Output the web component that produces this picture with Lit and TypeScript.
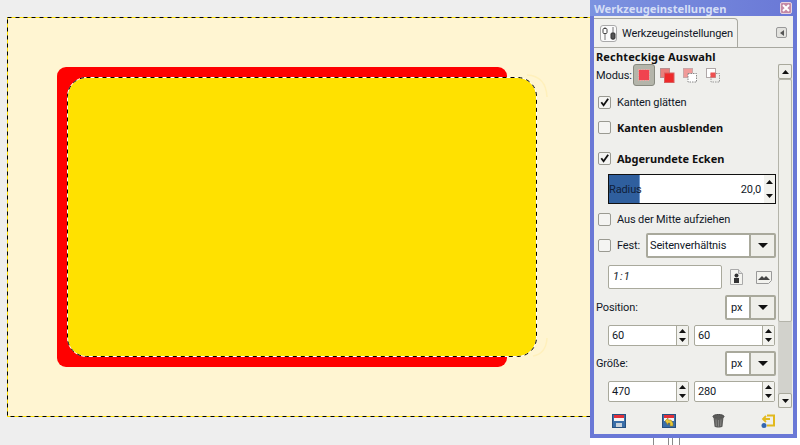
import { LitElement, css, html, svg } from "lit";
import { customElement } from "lit/decorators.js";

const arrowUp = svg`<svg width="7" height="4" viewBox="0 0 7 4"><path d="M3.5 0L7 4H0z" fill="#111"/></svg>`;
const arrowDown = svg`<svg width="7" height="4" viewBox="0 0 7 4"><path d="M0 0h7L3.5 4z" fill="#111"/></svg>`;
const comboArrow = svg`<svg width="10" height="5" viewBox="0 0 10 5"><path d="M0 0h10L5 5z" fill="#111"/></svg>`;
const check = svg`<svg width="12" height="12" viewBox="0 0 12 12"><path d="M2.500 6.200L5 9.500 10 2.500" fill="none" stroke="#111" stroke-width="2"/></svg>`;

const modeIcon = (i: number) => {
  if (i === 0)
    return svg`<svg width="14" height="14" viewBox="0 0 14 14"><rect x="2" y="2" width="10" height="10" fill="#f0434f"/><rect x="1.500" y="1.500" width="11" height="11" fill="none" stroke="#f7a0a0" stroke-dasharray="1.500 1"/></svg>`;
  if (i === 1)
    return svg`<svg width="15" height="15" viewBox="0 0 15 15"><rect x=".5" y=".5" width="9" height="9" fill="#e8807c" stroke="#b89090"/><rect x="4.500" y="5" width="9.500" height="9.500" fill="#ee2a2a" stroke="#d86060"/></svg>`;
  if (i === 2)
    return svg`<svg width="15" height="15" viewBox="0 0 15 15"><rect x=".5" y=".5" width="9" height="9" fill="#f09a98" stroke="#c8a8a8"/><rect x="5" y="5.500" width="8.500" height="8.500" fill="#fff" stroke="#888" stroke-dasharray="1.500 1"/></svg>`;
  return svg`<svg width="15" height="15" viewBox="0 0 15 15"><rect x=".5" y=".5" width="9" height="9" fill="#fff" stroke="#b0a8a8"/><rect x="5" y="5.500" width="8.500" height="8.500" fill="none" stroke="#999" stroke-dasharray="1.500 1"/><rect x="4.500" y="4.500" width="5" height="5" fill="#ee5050"/></svg>`;
};

const toolIcon = svg`<svg width="14" height="15" viewBox="0 0 14 15">
  <path d="M3 1v13M11 1v13" stroke="#777" stroke-width="1"/>
  <rect x="1" y="2.500" width="4" height="5" rx="1" fill="#fff" stroke="#444"/>
  <rect x="9" y="7" width="4" height="6" rx="1" fill="#555" stroke="#333"/>
</svg>`;

const docIcon = svg`<svg width="13" height="16" viewBox="0 0 13 16"><path d="M.5.5h8l4 4v11H.5z" fill="#f4f4f0" stroke="#aaa"/><path d="M8.500.5v4h4" fill="#ddd" stroke="#aaa"/><circle cx="6.500" cy="6.500" r="2" fill="#333"/><rect x="4" y="9" width="5" height="5" fill="#333"/></svg>`;
const landscapeIcon = svg`<svg width="16" height="13" viewBox="0 0 16 13"><path d="M.5.5h15v9l-3 3H.5z" fill="#f2f2ee" stroke="#999"/><path d="M2 9l4-4 2 2 2-2 4 4z" fill="#444"/></svg>`;

const saveIcon = svg`<svg width="14" height="14" viewBox="0 0 14 14"><rect x=".5" y=".5" width="13" height="13" fill="#3a6ea8" stroke="#27507f"/><rect x="2" y="1" width="10" height="3" fill="#e0303a"/><rect x="2" y="4" width="10" height="3" fill="#f4f4f4"/><rect x="4" y="9" width="6" height="4" fill="#c8d2dc"/></svg>`;
const restoreIcon = svg`<svg width="14" height="14" viewBox="0 0 14 14"><rect x=".5" y=".5" width="13" height="13" fill="#3a6ea8" stroke="#27507f"/><rect x="2" y="1" width="10" height="3" fill="#e0303a"/><rect x="2" y="4" width="10" height="3" fill="#f4f4f4"/><path d="M3 7l3-3v2h3l2 3v3H8V9H6v2z" fill="#e8c83a" stroke="#8a7420" stroke-width=".5"/></svg>`;
const trashIcon = svg`<svg width="13" height="14" viewBox="0 0 13 14"><ellipse cx="6.500" cy="2.500" rx="5.500" ry="2" fill="#5c5c5a" stroke="#444"/><path d="M1.500 3l1 9.500c1 1.300 7 1.300 8 0l1-9.500c-2 1.500-8 1.500-10 0z" fill="#5e5e5c"/><path d="M4 5.500l.4 6.500M6.500 6v6.500M9 5.500l-.4 6.500" stroke="#858583"/></svg>`;
const resetIcon = svg`<svg width="14" height="14" viewBox="0 0 14 14"><path d="M6 1.500h7v10H6" fill="none" stroke="#e2b91e" stroke-width="2"/><path d="M2 5h7M5 2L2 5l3 3" fill="none" stroke="#e2b91e" stroke-width="1.800"/><circle cx="3" cy="11.500" r="2.500" fill="#3566b0"/></svg>`;

@customElement("app-root")
export class AppRoot extends LitElement {
  static styles = css`
    :host {
      display: flex;
      width: 800px;
      height: 445px;
      overflow: hidden;
      background: #eeeeee;
      font-family: Roboto, "Noto Sans", sans-serif;
      font-size: 11px;
      letter-spacing: -0.12px;
      color: #111827;
    }
    .canvas {
      display: block;
      width: 590px;
      height: 445px;
      flex: none;
    }
    .side {
      width: 210px;
      height: 445px;
      flex: none;
      background: #fff;
      display: flex;
      flex-direction: column;
    }
    .window {
      width: 207px;
      height: 438px;
      flex: none;
      box-sizing: border-box;
      border: 4px solid #6a78d6;
      border-top: none;
      background: #efefec;
      display: flex;
      flex-direction: column;
    }
    .leftover {
      flex: 1;
      display: flex;
      padding-left: 63px;
    }
    .leftover i {
      width: 1px;
      background: #8a8a8a;
    }
    .leftover i:nth-child(1) {
      margin-right: 14px;
    }
    .leftover i:nth-child(2) {
      margin-right: 3px;
    }
    .leftover i:nth-child(3) {
      margin-right: 6px;
    }
    .titlebar {
      height: 16px;
      margin: 0 -4px;
      padding: 0 5px 0 4px;
      flex: none;
      display: flex;
      align-items: center;
      justify-content: space-between;
      background: linear-gradient(90deg, #7c93e0, #6a78d6);
      color: #d5def6;
      font-family: "Noto Sans", sans-serif;
      font-weight: 700;
      font-size: 11.2px;
      letter-spacing: 0;
    }
    .close {
      width: 12px;
      height: 12px;
      box-sizing: border-box;
      background: #c48aa6;
      border: 1px solid #e6d4e0;
      border-radius: 2px;
      display: flex;
      align-items: center;
      justify-content: center;
    }
    .tabs {
      height: 31px;
      flex: none;
      display: flex;
      align-items: flex-end;
      justify-content: space-between;
      padding-right: 6px;
    }
    .tab {
      width: 144px;
      height: 30px;
      flex: none;
      box-sizing: border-box;
      border: 1px solid #a8a8a0;
      border-width: 1px 1px 0 0;
      border-top-right-radius: 4px;
      display: flex;
      align-items: center;
      gap: 5px;
      padding-left: 6px;
      background: #f1f1ee;
      margin-bottom: -1px;
      white-space: nowrap;
    }
    .tab-icon {
      width: 17px;
      height: 17px;
      flex: none;
      box-sizing: border-box;
      border: 1px solid #aaa;
      border-radius: 3px;
      background: #fbfbfb;
      display: flex;
      align-items: center;
      justify-content: center;
    }
    .pane-menu {
      width: 11px;
      height: 11px;
      box-sizing: border-box;
      border: 1px solid #999;
      border-radius: 2px;
      margin-bottom: 9px;
      display: flex;
      align-items: center;
      justify-content: center;
      background: #e2e2de;
    }
    .pane-menu b {
      border: 3px solid transparent;
      border-right: 4px solid #555;
      border-left: none;
    }
    .pane {
      flex: 1;
      min-height: 0;
      border-top: 1px solid #a8a8a0;
      display: flex;
      flex-direction: column;
    }
    .heading {
      height: 15px;
      margin: 1px 0 0 2px;
      line-height: 15px;
      font-family: "Noto Sans", sans-serif;
      font-weight: 700;
      font-size: 11px;
      letter-spacing: 0.15px;
      color: #111;
    }
    .main {
      display: flex;
      flex: none;
      height: 344px;
    }
    .opts {
      width: 184px;
      flex: none;
      display: flex;
      flex-direction: column;
      padding-left: 2px;
      box-sizing: border-box;
    }
    .row {
      display: flex;
      align-items: center;
      flex: none;
    }
    .modus {
      height: 22px;
      margin-bottom: 4px;
    }
    .modus span {
      width: 37px;
    }
    .mode {
      width: 22px;
      height: 22px;
      margin-right: 1px;
      display: flex;
      align-items: center;
      justify-content: center;
      box-sizing: border-box;
    }
    .mode.on {
      background: #b4b5aa;
      border: 1px solid #888a80;
      border-radius: 3px;
    }
    .check {
      height: 24px;
      gap: 6px;
      padding-left: 2px;
    }
    .check.bold {
      font-family: "Noto Sans", sans-serif;
      font-weight: 700;
      letter-spacing: 0;
      color: #111;
    }
    .gap1 {
      margin-top: 1px;
    }
    .gap7 {
      margin-top: 7px;
    }
    .box {
      width: 13px;
      height: 13px;
      flex: none;
      box-sizing: border-box;
      border: 1px solid #9a9a92;
      border-radius: 2px;
      background: #f4f4f2;
      display: flex;
      align-items: center;
      justify-content: center;
    }
    .scale {
      height: 30px;
      width: 168px;
      flex: none;
      margin: 4px 0 3px 12px;
      box-sizing: border-box;
      border: 1px solid #111;
      background: #fff;
      display: flex;
      align-items: center;
      justify-content: space-between;
    }
    .scale-fill {
      width: 30px;
      height: 28px;
      background: #2f5f9e;
      border-right: 1px solid #6f9ad0;
      display: flex;
      align-items: center;
      white-space: nowrap;
      color: #10203a;
    }
    .scale-end {
      display: flex;
      align-items: center;
      gap: 3px;
      height: 100%;
    }
    .stepper {
      width: 11px;
      height: 100%;
      display: flex;
      flex-direction: column;
      align-items: center;
      justify-content: space-around;
      background: #f2f2ee;
    }
    .fest {
      height: 25px;
      margin-top: 2px;
      padding-left: 2px;
    }
    .fest .lab {
      width: 29px;
      margin-left: 6px;
      flex: none;
    }
    .combo {
      height: 25px;
      flex: none;
      box-sizing: border-box;
      border: 2px solid #a9a99c;
      border-radius: 2px;
      display: flex;
      background: #fff;
    }
    .combo span {
      flex: 1;
      line-height: 21px;
      padding-left: 2px;
    }
    .combo b {
      width: 23px;
      background: #efefea;
      border-left: 2px solid #a9a99c;
      display: flex;
      align-items: center;
      justify-content: center;
    }
    .combo-wide {
      width: 130px;
    }
    .combo-unit {
      width: 51px;
      margin-left: auto;
      margin-right: 2px;
    }
    .combo-unit span {
      padding-left: 4px;
    }
    .ratio {
      height: 24px;
      margin: 7px 0 6px 12px;
    }
    .ratio-entry {
      width: 114px;
      height: 24px;
      flex: none;
      box-sizing: border-box;
      border: 1px solid #a9a99c;
      border-radius: 2px;
      background: #fff;
      line-height: 22px;
      padding-left: 4px;
      font-style: italic;
      letter-spacing: 1px;
    }
    .ratio .doc {
      margin-left: 8px;
      width: 13px;
      display: flex;
    }
    .ratio .land {
      margin-left: 13px;
      width: 16px;
      display: flex;
    }
    .unit-row {
      height: 24px;
    }
    .unit-row.next {
      margin-top: 5px;
    }
    .spins {
      height: 21px;
      margin: 6px 0 0 12px;
      gap: 5px;
    }
    .spin {
      width: 81px;
      height: 21px;
      box-sizing: border-box;
      border: 1px solid #a9a99c;
      border-radius: 2px;
      background: #fff;
      display: flex;
      justify-content: space-between;
    }
    .spin span {
      line-height: 19px;
      padding-left: 3px;
    }
    .spin .stepper {
      border-left: 1px solid #a9a99c;
    }
    .scrollbar {
      width: 14px;
      height: 344px;
      flex: none;
      display: flex;
      flex-direction: column;
      background: #d2d2cc;
    }
    .sb-btn {
      height: 15px;
      flex: none;
      box-sizing: border-box;
      border: 1px solid #a9a99c;
      border-radius: 2px;
      background: #efefea;
      display: flex;
      align-items: center;
      justify-content: center;
    }
    .sb-thumb {
      height: 243px;
      flex: none;
      box-sizing: border-box;
      border: 1px solid #b4b4aa;
      border-radius: 2px;
      background: #efefea;
    }
    .sb-track {
      flex: 1;
    }
    .footer {
      flex: 1;
      display: flex;
      align-items: center;
      padding: 0 18px;
      justify-content: space-between;
      box-sizing: border-box;
    }
    .footer span {
      display: flex;
    }
  `;

  private unitCombo() {
    return html`<div class="combo combo-unit"><span>px</span><b>${comboArrow}</b></div>`;
  }

  private spin(value: string) {
    return html`<div class="spin">
      <span>${value}</span>
      <div class="stepper">${arrowUp}${arrowDown}</div>
    </div>`;
  }

  private renderCanvas() {
    return svg`<svg class="canvas" viewBox="0 0 590 445" xmlns="http://www.w3.org/2000/svg">
      <rect width="590" height="445" fill="#eeeeee"/>
      <rect x="7.500" y="17.500" width="600" height="399" fill="#fff5d2"/>
      <path d="M527 75Q546 76 547 97M547 338Q546 354 533 356" fill="none" stroke="#fff0bc" stroke-width="1.500"/>
      <rect x="57" y="67" width="450" height="300" rx="9" fill="#ff0000"/>
      <rect x="67.500" y="77.500" width="469" height="279" rx="19" fill="#ffe100"/>
      <rect x="67.500" y="77.500" width="469" height="279" rx="19" fill="none" stroke="#fff"/>
      <rect x="67.500" y="77.500" width="469" height="279" rx="19" fill="none" stroke="#000" stroke-dasharray="4 4"/>
      <rect x="7.500" y="17.500" width="600" height="399" fill="none" stroke="#ffe100"/>
      <rect x="7.500" y="17.500" width="600" height="399" fill="none" stroke="#000" stroke-dasharray="4 4"/>
    </svg>`;
  }

  render() {
    return html`
      ${this.renderCanvas()}
      <div class="side">
        <div class="window">
          <div class="titlebar">
            <span>Werkzeugeinstellungen</span>
            <div class="close">
              <svg width="8" height="8" viewBox="0 0 8 8"><path d="M1 1l6 6M7 1L1 7" stroke="#fff" stroke-width="2"/></svg>
            </div>
          </div>
          <div class="tabs">
            <div class="tab">
              <div class="tab-icon">${toolIcon}</div>
              <span>Werkzeugeinstellungen</span>
            </div>
            <div class="pane-menu"><b></b></div>
          </div>
          <div class="pane">
            <div class="heading">Rechteckige Auswahl</div>
            <div class="main">
              <div class="opts">
                <div class="row modus">
                  <span>Modus:</span>
                  ${[0, 1, 2, 3].map((i) => html`<div class="mode ${i === 0 ? "on" : ""}">${modeIcon(i)}</div>`)}
                </div>
                <div class="row check"><div class="box">${check}</div>Kanten glätten</div>
                <div class="row check bold gap1"><div class="box"></div>Kanten ausblenden</div>
                <div class="row check bold gap7"><div class="box">${check}</div>Abgerundete Ecken</div>
                <div class="scale">
                  <div class="scale-fill">Radius</div>
                  <div class="scale-end">20,0<div class="stepper">${arrowUp}${arrowDown}</div></div>
                </div>
                <div class="row check"><div class="box"></div>Aus der Mitte aufziehen</div>
                <div class="row fest">
                  <div class="box"></div>
                  <div class="lab">Fest:</div>
                  <div class="combo combo-wide"><span>Seitenverhältnis</span><b>${comboArrow}</b></div>
                </div>
                <div class="row ratio">
                  <div class="ratio-entry">1:1</div>
                  <div class="doc">${docIcon}</div>
                  <div class="land">${landscapeIcon}</div>
                </div>
                <div class="row unit-row"><span>Position:</span>${this.unitCombo()}</div>
                <div class="row spins">${this.spin("60")}${this.spin("60")}</div>
                <div class="row unit-row next"><span>Größe:</span>${this.unitCombo()}</div>
                <div class="row spins">${this.spin("470")}${this.spin("280")}</div>
              </div>
              <div class="scrollbar">
                <div class="sb-btn">${arrowUp}</div>
                <div class="sb-thumb"></div>
                <div class="sb-track"></div>
                <div class="sb-btn">${arrowDown}</div>
              </div>
            </div>
            <div class="footer">
              <span>${saveIcon}</span><span>${restoreIcon}</span><span>${trashIcon}</span><span>${resetIcon}</span>
            </div>
          </div>
        </div>
        <div class="leftover"><i></i><i></i><i></i><i></i></div>
      </div>
    `;
  }
}
